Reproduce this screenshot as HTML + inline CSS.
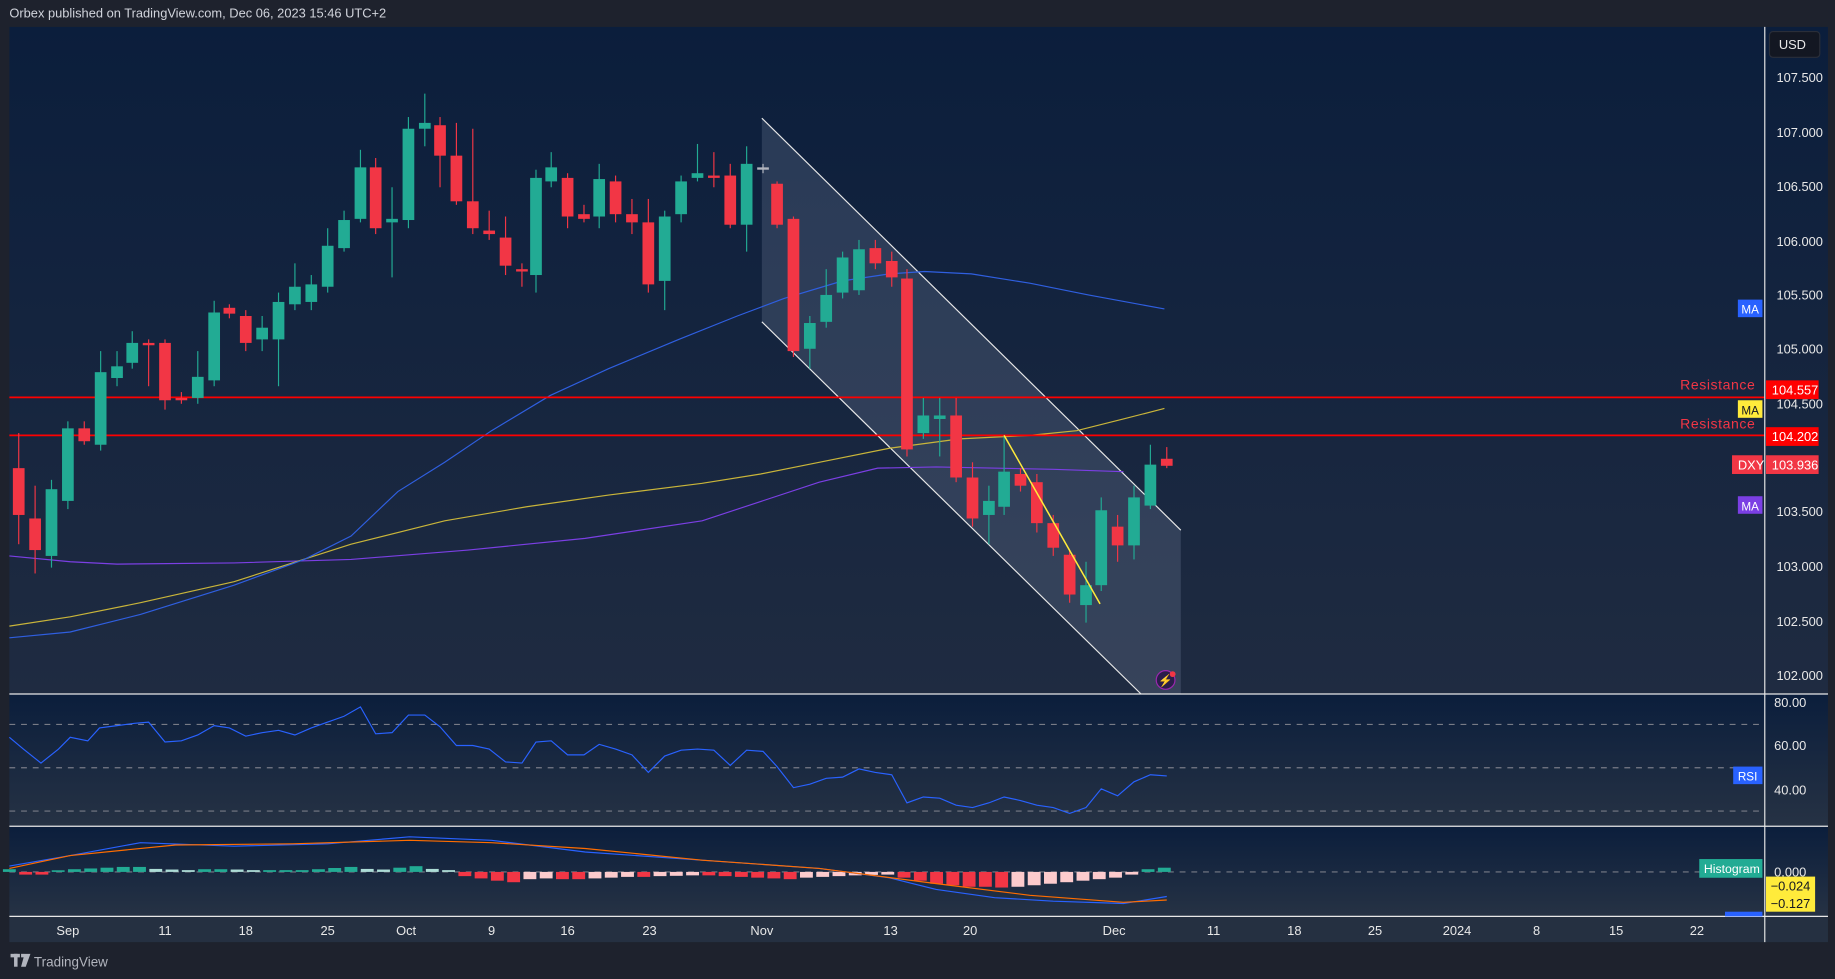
<!DOCTYPE html>
<html><head><meta charset="utf-8"><style>
html,body{margin:0;padding:0;background:#1e222d;overflow:hidden}
svg{display:block}
text{font-family:"Liberation Sans",sans-serif}
</style></head><body>
<svg id="s" width="1835" height="979" viewBox="0 0 1568 836.5" preserveAspectRatio="none" xmlns="http://www.w3.org/2000/svg">
<defs>
<linearGradient id="gm" x1="0" y1="0" x2="0" y2="1"><stop offset="0" stop-color="#0b1e3c"/><stop offset="1" stop-color="#1f2b41"/></linearGradient>
<linearGradient id="gr" x1="0" y1="0" x2="0" y2="1"><stop offset="0" stop-color="#0b1e3c"/><stop offset="1" stop-color="#263244"/></linearGradient>
</defs>
<rect width="1568" height="837" fill="#1e222d"/>
<text x="8" y="15" font-size="11" fill="#d1d4dc">Orbex published on TradingView.com, Dec 06, 2023 15:46 UTC+2</text>
<rect x="8" y="23" width="1554" height="570" fill="url(#gm)"/>
<rect x="8" y="593" width="1554" height="113" fill="url(#gr)"/>
<rect x="8" y="706" width="1554" height="77" fill="url(#gr)"/>
<rect x="8" y="783" width="1554" height="22" fill="#253041"/>
<!-- channel -->
<polygon points="651,101 1009,453 1009,593 975,593 651,275" fill="#8e9ab5" fill-opacity="0.22"/>
<line x1="651" y1="101" x2="1009" y2="453" stroke="#e8e8e8" stroke-width="1"/>
<line x1="651" y1="275" x2="975" y2="593" stroke="#e8e8e8" stroke-width="1"/>
<!-- MAs -->
<polyline fill="none" stroke="#7b3fe4" stroke-width="1" points="8,475 60,480 100,482 200,481 300,478 400,470 500,460 600,445 700,412 750,400 800,399 900,401 960,403"/>
<polyline fill="none" stroke="#c9b53a" stroke-width="1" points="8,535 60,527 120,515 200,497 300,465 380,445 450,433 520,423 600,413 650,405 700,395 760,383 820,375 880,372 920,368 960,358 995,349"/>
<polyline fill="none" stroke="#2f5fe0" stroke-width="1" points="8,545 60,540 120,525 200,500 260,478 300,458 340,420 380,395 420,368 470,338 520,315 580,290 630,270 670,255 720,240 760,234 790,232 830,234 880,242 930,252 995,264"/>
<!-- resistance -->
<line x1="8" y1="339.5" x2="1508" y2="339.5" stroke="#ff0000" stroke-width="1.5"/>
<line x1="8" y1="372" x2="1508" y2="372" stroke="#ff0000" stroke-width="1.5"/>
<text x="1500" y="333" font-size="12" fill="#f23645" text-anchor="end" letter-spacing="0.5">Resistance</text>
<text x="1500" y="366" font-size="12" fill="#f23645" text-anchor="end" letter-spacing="0.5">Resistance</text>
<g id="candles"></g>
<line x1="858" y1="372" x2="940" y2="516" stroke="#ffeb3b" stroke-width="1.3"/>
<circle cx="996" cy="581" r="8" fill="#2b1d4a" stroke="#9c27b0"/>
<text x="996" y="585" font-size="10" fill="#c77dff" text-anchor="middle">⚡</text>
<circle cx="1002" cy="576" r="2.5" fill="#f23645"/>
<!-- RSI -->
<g stroke="#787b86" stroke-dasharray="5,5" stroke-width="1"><line x1="8" y1="619" x2="1508" y2="619"/><line x1="8" y1="656" x2="1508" y2="656"/><line x1="8" y1="693" x2="1508" y2="693"/><line x1="8" y1="745" x2="1508" y2="745"/></g>
<polyline fill="none" stroke="#2962ff" stroke-width="1" points="8,630 20,640 35,652 50,640 60,630 75,633 85,622 100,620 115,618 127,617 141,634 155,633 169,628 183,620 196,622 210,629 224,626 238,624 252,628 266,622 280,617 294,612 308,604 321,627 335,626 349,611 363,611 376,621 390,637 404,637 418,640 432,651 446,652 458,634 471,633 485,645 499,645 512,636 526,640 540,645 554,660 568,646 582,641 596,640 610,641 624,654 638,641 652,642 664,655 678,673 692,670 706,665 720,664 734,657 748,660 762,662 775,686 789,681 803,682 817,688 831,690 845,686 858,681 872,684 886,688 900,690 914,695 928,690 941,674 955,680 969,668 983,662 997,663"/>
<!-- MACD -->
<g id="hist"></g>
<polyline fill="none" stroke="#2962ff" stroke-width="1" points="8,740 60,731 120,720 200,723 280,721 350,715 420,718 500,728 600,735 700,742 760,750 800,760 850,767 900,770 960,772 997,766"/>
<polyline fill="none" stroke="#ff6d00" stroke-width="1" points="8,742 60,731 150,722 250,721 350,718 420,720 500,725 600,735 700,742 800,755 880,765 960,771 997,769"/>
<!-- frames -->
<g stroke="#e8e8e8" stroke-width="1"><line x1="8" y1="593" x2="1562" y2="593"/><line x1="8" y1="706" x2="1562" y2="706"/><line x1="8" y1="783" x2="1562" y2="783"/><line x1="1508" y1="23" x2="1508" y2="805"/></g>
<!-- axis -->
<rect x="1512" y="27" width="43" height="22" rx="3" fill="#131722" stroke="#2a2e39"/>
<g font-size="11" fill="#e8e8e8">
<text x="1520" y="42">USD</text>
<text x="1518" y="70">107.500</text><text x="1518" y="117">107.000</text><text x="1518" y="163">106.500</text><text x="1518" y="210">106.000</text><text x="1518" y="256">105.500</text><text x="1518" y="302">105.000</text><text x="1518" y="349">104.500</text><text x="1518" y="441">103.500</text><text x="1518" y="488">103.000</text><text x="1518" y="535">102.500</text><text x="1518" y="581">102.000</text>
<text x="1516" y="604">80.00</text><text x="1516" y="641">60.00</text><text x="1516" y="679">40.00</text><text x="1516" y="749">0.000</text>
</g>
<rect x="1509" y="325" width="45" height="16" fill="#ff0000"/><text x="1514" y="337" font-size="11" fill="#fff">104.557</text>
<rect x="1509" y="365" width="45" height="16" fill="#ff0000"/><text x="1514" y="377" font-size="11" fill="#fff">104.202</text>
<rect x="1509" y="389" width="45" height="16" fill="#f23645"/><text x="1514" y="401" font-size="11" fill="#fff">103.936</text>
<rect x="1480" y="389" width="26" height="16" fill="#f23645"/><text x="1485" y="401" font-size="11" fill="#fff">DXY</text>
<rect x="1485" y="256" width="21" height="15" fill="#2962ff"/><text x="1488" y="268" font-size="10" fill="#fff">MA</text>
<rect x="1485" y="342" width="21" height="15" fill="#ffeb3b"/><text x="1488" y="354" font-size="10" fill="#131722">MA</text>
<rect x="1485" y="424" width="21" height="15" fill="#7b3fe4"/><text x="1488" y="436" font-size="10" fill="#fff">MA</text>
<rect x="1481" y="655" width="25" height="15" fill="#2962ff"/><text x="1485" y="667" font-size="10" fill="#fff">RSI</text>
<rect x="1452" y="734" width="54" height="16" fill="#22ab94"/><text x="1456" y="746" font-size="10.5" fill="#fff">Histogram</text>
<rect x="1509" y="749" width="42" height="30" fill="#ffeb3b"/><text x="1513" y="761" font-size="11" fill="#131722">−0.024</text><text x="1513" y="776" font-size="11" fill="#131722">−0.127</text>
<rect x="1474" y="779" width="32" height="4" fill="#2962ff"/>
<g font-size="11" fill="#e8e8e8" text-anchor="middle">
<text x="58" y="799">Sep</text><text x="141" y="799">11</text><text x="210" y="799">18</text><text x="280" y="799">25</text><text x="347" y="799">Oct</text><text x="420" y="799">9</text><text x="485" y="799">16</text><text x="555" y="799">23</text><text x="651" y="799">Nov</text><text x="761" y="799">13</text><text x="829" y="799">20</text><text x="952" y="799">Dec</text><text x="1037" y="799">11</text><text x="1106" y="799">18</text><text x="1175" y="799">25</text><text x="1245" y="799">2024</text><text x="1313" y="799">8</text><text x="1381" y="799">15</text><text x="1450" y="799">22</text>
</g>
<g fill="#b2b5be"><rect x="9" y="815" width="8" height="3"/><rect x="12" y="815" width="3" height="11"/><rect x="18" y="815" width="3" height="3"/><polygon points="21,815 26,815 22,826 18,826"/></g>
<text x="29" y="826" font-size="11.5" fill="#b2b5be">TradingView</text>
</svg>
<script>
var C=[[16,400,440,370,465,0],[30,443,470,415,490,0],[44,418,475,410,485,1],[58,366,428,360,435,1],[72,366,377,360,380,0],[86,318,380,300,385,1],[100,313,323,300,330,1],[113,293,310,283,315,1],[127,293,295,290,330,0],[141,293,342,290,350,0],[155,340,342,335,345,0],[169,322,340,300,345,1],[183,267,325,257,330,1],[196,263,268,260,272,0],[210,270,293,265,300,0],[224,280,290,270,300,1],[238,258,290,250,330,1],[252,245,260,225,265,1],[266,243,258,235,265,1],[280,210,245,195,250,1],[294,188,212,180,215,1],[308,143,187,128,190,1],[321,143,195,135,200,0],[335,187,190,160,237,1],[349,110,188,100,195,1],[363,105,110,80,125,1],[376,107,133,100,160,0],[390,133,172,105,175,0],[404,172,195,110,200,0],[418,197,200,180,205,0],[432,203,227,185,235,0],[446,230,232,225,245,0],[458,152,235,145,250,1],[471,143,155,130,160,1],[485,152,185,148,195,0],[499,183,187,175,190,0],[512,153,185,140,195,1],[526,155,183,150,190,0],[540,183,190,170,200,0],[554,190,243,170,250,0],[568,185,240,180,265,1],[582,155,183,150,190,1],[596,148,152,123,155,1],[610,150,152,130,160,0],[624,150,192,140,195,0],[638,140,192,125,215,1],[652,143,145,140,148,2],[664,157,192,155,195,0],[678,187,300,185,305,0],[692,276,298,270,315,1],[706,252,275,230,280,1],[720,220,250,215,255,1],[734,213,248,205,252,1],[748,212,225,205,230,0],[762,223,237,215,245,0],[775,238,384,230,390,0],[789,355,370,340,375,1],[803,355,358,340,390,1],[817,355,408,340,412,0],[831,408,443,395,450,0],[845,428,440,415,465,1],[858,403,433,372,440,1],[872,405,415,400,420,0],[886,412,447,405,455,0],[900,447,468,440,475,0],[914,474,508,470,515,0],[928,500,517,480,532,1],[941,436,500,425,505,1],[955,450,466,440,480,0],[969,425,466,415,478,1],[983,397,432,380,435,1],[997,392,398,382,400,0]];
var ns="http://www.w3.org/2000/svg",g=document.getElementById("candles"),s="";
C.forEach(function(c){var col=c[5]==1?"#22ab94":c[5]==0?"#f23645":"#b2b5be";var h=Math.max(1.5,c[2]-c[1]);
s+='<line x1="'+c[0]+'" y1="'+c[3]+'" x2="'+c[0]+'" y2="'+c[4]+'" stroke="'+col+'"/><rect x="'+(c[0]-5)+'" y="'+c[1]+'" width="10" height="'+h+'" fill="'+col+'"/>';});
g.innerHTML=s;
var H=[1,-1,-1,0.3,1,1.5,2,2.5,2.5,1.2,0.8,0.4,1,1,0.8,0.4,0.4,0.4,0.4,1,1.8,2.5,1.2,0.8,2,3,1.2,0.4,-2,-3.5,-5,-6,-4,-3.5,-4,-4,-3.5,-3,-2.5,-2.5,-2,-1.8,-1.5,-1.5,-2,-2.5,-3,-3.5,-4,-3,-2.5,-2,-1.5,-1.2,-1,-3,-5,-7,-8,-9,-9,-9.5,-9,-8,-7,-6,-5,-4,-3,-1,1,2];
var hs="";H.forEach(function(v,i){var x=8+i*13.9,pos=v>=0,prev=i?H[i-1]:v;var col=pos?(v>=prev?"#22ab94":"#acdcd6"):(v<=prev?"#f23645":"#fccbcd");var hh=Math.abs(v)*1.3+1;hs+='<rect x="'+(x-5.5)+'" y="'+(pos?745-hh:745)+'" width="11" height="'+hh+'" fill="'+col+'"/>';});
document.getElementById("hist").innerHTML=hs;
</script>
</body></html>
